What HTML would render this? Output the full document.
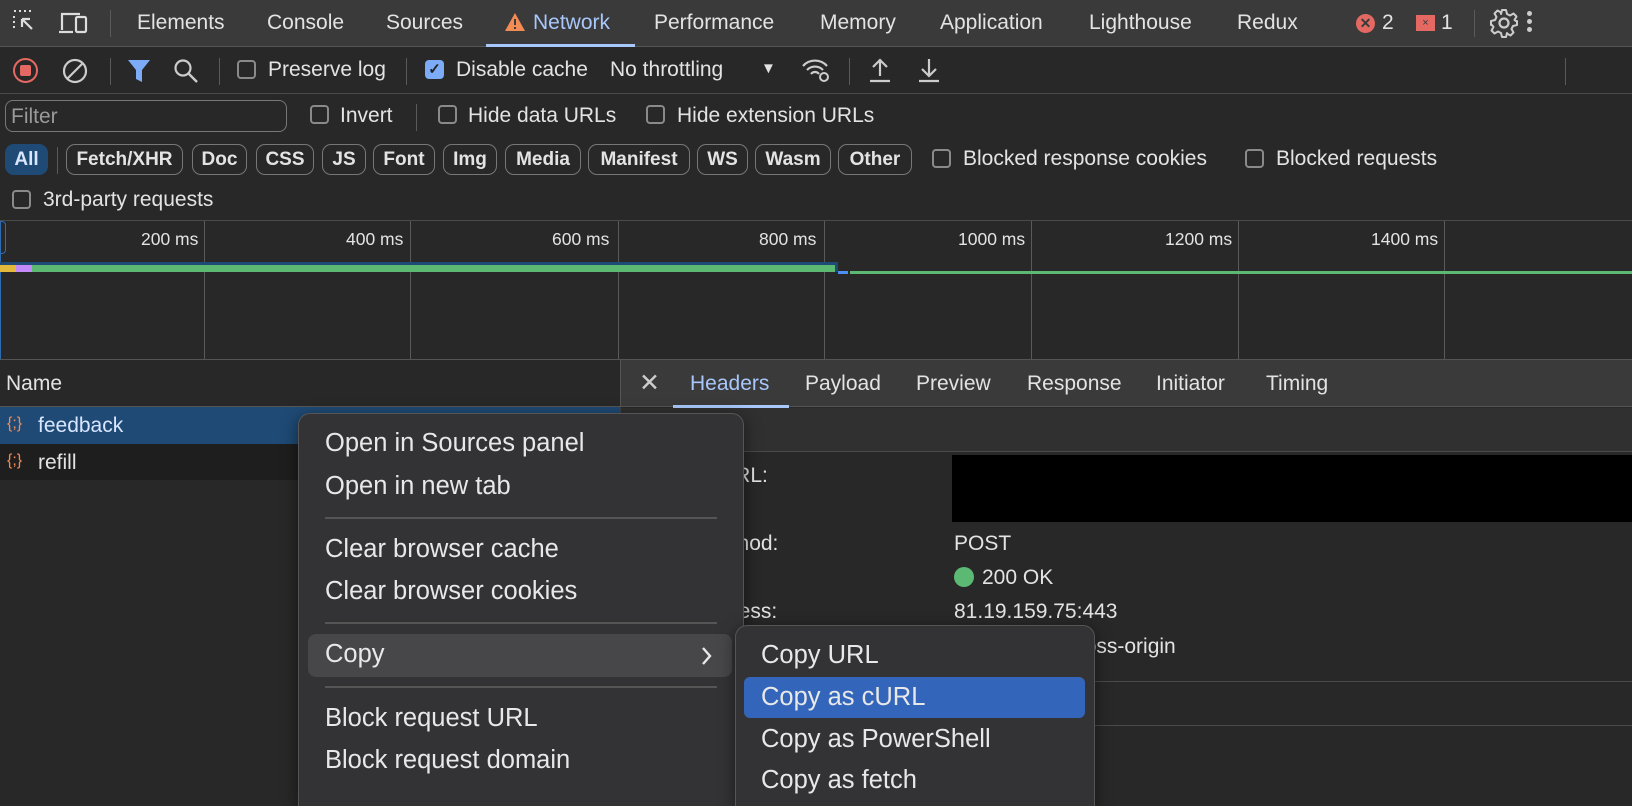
<!DOCTYPE html>
<html style="overflow:hidden;height:806px"><head><style>
*{box-sizing:border-box;margin:0;padding:0}
body{width:1632px;height:806px;overflow:hidden;background:#282828;font-family:"Liberation Sans",sans-serif;color:#e3e3e3;position:relative;font-size:21px}
.a{position:absolute;white-space:nowrap}
.cb{position:absolute;width:19px;height:19px;border:2px solid #8a8a8a;border-radius:4px}
.pill{position:absolute;top:144px;height:31px;border:1px solid #777;border-radius:9px;font-size:19px;font-weight:bold;line-height:29px;text-align:center;color:#e3e3e3}
.vl{position:absolute;width:1px;background:#5a5a5a}
.menu{position:absolute;background:#333335;border:1px solid #555;border-bottom:none;border-radius:12px 12px 0 0;box-shadow:0 4px 16px rgba(0,0,0,.5)}
.mi{position:absolute;font-size:25.5px;color:#e8e8e8}
.tl{position:absolute;top:229px;font-size:17.5px}
.dot{position:absolute;width:5px;height:5px;border-radius:50%;background:#ccc}
</style></head><body>
<div class="a" style="left:0;top:0;width:1632px;height:47px;background:#3a3a3a;border-bottom:1px solid #555"></div>
<svg class="a" style="left:12px;top:9px" width="40" height="28" viewBox="0 0 40 28"><path d="M2 2h2M7 2h2M12 2h2M17 2h2M2 7v2M2 12v2M2 17v2" stroke="#ddd" stroke-width="2"/><path d="M10 10l10 10M10 10v8M10 10h8" stroke="#ddd" stroke-width="2.2" fill="none"/></svg>
<svg class="a" style="left:58px;top:8px" width="34" height="30"><path d="M4 22V6h18" stroke="#ddd" stroke-width="2.2" fill="none"/><path d="M1 24h14" stroke="#ddd" stroke-width="2.2"/><rect x="18" y="9" width="10" height="15" rx="1.5" stroke="#ddd" stroke-width="2.2" fill="none"/></svg>
<div class="vl" style="left:110px;top:10px;height:27px"></div>
<div class="a" style="left:137px;top:11px">Elements</div>
<div class="a" style="left:267px;top:11px">Console</div>
<div class="a" style="left:386px;top:11px">Sources</div>
<svg class="a" style="left:504px;top:12px" width="22" height="20"><path d="M11 1L21 19H1Z" fill="#f28b54"/><path d="M11 7v6M11 15v2" stroke="#3a3a3a" stroke-width="2"/></svg>
<div class="a" style="left:533px;top:11px;color:#a8c7fa">Network</div>
<div class="a" style="left:486px;top:44px;width:149px;height:3px;background:#a8c7fa"></div>
<div class="a" style="left:654px;top:11px">Performance</div>
<div class="a" style="left:820px;top:11px">Memory</div>
<div class="a" style="left:940px;top:11px">Application</div>
<div class="a" style="left:1089px;top:11px">Lighthouse</div>
<div class="a" style="left:1237px;top:11px">Redux</div>
<div class="a" style="left:1356px;top:14px;width:19px;height:19px;border-radius:50%;background:#e46962;color:#3a3a3a;font-size:14px;line-height:19px;text-align:center;font-weight:bold">✕</div>
<div class="a" style="left:1382px;top:11px">2</div>
<div class="a" style="left:1416px;top:15px;width:19px;height:16px;background:#e46962;color:#3a3a3a;font-size:11px;text-align:center;line-height:16px">×</div>
<div class="a" style="left:1441px;top:11px">1</div>
<div class="vl" style="left:1474px;top:10px;height:27px"></div>
<svg class="a" style="left:1489px;top:8px" width="30" height="30" viewBox="0 0 30 30"><circle cx="15" cy="15" r="4.5" stroke="#ccc" stroke-width="2.2" fill="none"/><path d="M13 2h4l1 4 3 1.5 3.5-2 3 3-2 3.5L27 13l1 0v4l-4 1-1.5 3 2 3.5-3 3-3.5-2L18 25l-1 4h-4l-1-4-3-1.5-3.5 2-3-3 2-3.5L3 17H2v-4l4-1 1.5-3-2-3.5 3-3 3.5 2L12 6Z" stroke="#ccc" stroke-width="2" fill="none" stroke-linejoin="round"/></svg>
<div class="dot" style="left:1527px;top:11px"></div>
<div class="dot" style="left:1527px;top:19px"></div>
<div class="dot" style="left:1527px;top:27px"></div>
<div class="a" style="left:0;top:93px;width:1632px;height:1px;background:#4a4a4a"></div>
<div class="a" style="left:13px;top:58px;width:25px;height:25px;border-radius:50%;border:2.5px solid #e46962"></div>
<div class="a" style="left:20px;top:65px;width:11px;height:11px;background:#e46962;border-radius:2px"></div>
<svg class="a" style="left:61px;top:57px" width="28" height="28"><circle cx="14" cy="14" r="11" stroke="#ccc" stroke-width="2.2" fill="none"/><path d="M6 22L22 6" stroke="#ccc" stroke-width="2.2"/></svg>
<div class="vl" style="left:110px;top:58px;height:27px"></div>
<svg class="a" style="left:127px;top:58px" width="24" height="26"><path d="M1 2h22L15 12v12l-6-3V12Z" fill="#7cacf8"/></svg>
<svg class="a" style="left:172px;top:57px" width="28" height="28"><circle cx="11" cy="11" r="7.5" stroke="#ccc" stroke-width="2.2" fill="none"/><path d="M16.5 16.5L25 25" stroke="#ccc" stroke-width="2.4"/></svg>
<div class="vl" style="left:219px;top:58px;height:27px"></div>
<div class="cb" style="left:237px;top:60px"></div>
<div class="a" style="left:268px;top:58px">Preserve log</div>
<div class="vl" style="left:406px;top:58px;height:27px"></div>
<div class="a" style="left:425px;top:60px;width:19px;height:19px;border-radius:4px;background:#7cacf8;color:#222;font-size:15px;text-align:center;line-height:19px;font-weight:bold">✓</div>
<div class="a" style="left:456px;top:58px">Disable cache</div>
<div class="a" style="left:610px;top:58px">No throttling</div>
<div class="a" style="left:761px;top:60px;font-size:15px">▼</div>
<svg class="a" style="left:800px;top:56px" width="34" height="28"><path d="M3 10a16 16 0 0 1 24 0M7 14a11 11 0 0 1 16 0M11 18a5 5 0 0 1 8 0" stroke="#ccc" stroke-width="2.2" fill="none"/><circle cx="24" cy="21" r="4" stroke="#ccc" stroke-width="2" fill="none"/></svg>
<div class="vl" style="left:849px;top:58px;height:27px"></div>
<svg class="a" style="left:868px;top:56px" width="24" height="28"><path d="M12 20V4M5 11l7-7 7 7M2 25h20" stroke="#ccc" stroke-width="2.2" fill="none"/></svg>
<svg class="a" style="left:917px;top:56px" width="24" height="28"><path d="M12 3v17M5 13l7 7 7-7M2 25h20" stroke="#ccc" stroke-width="2.2" fill="none"/></svg>
<div class="vl" style="left:1565px;top:58px;height:27px"></div>
<div class="a" style="left:5px;top:100px;width:282px;height:32px;border:1px solid #777;border-radius:8px;background:#282828"></div>
<div class="a" style="left:11px;top:105px;color:#9a9a9a">Filter</div>
<div class="cb" style="left:310px;top:105px"></div>
<div class="a" style="left:340px;top:104px">Invert</div>
<div class="vl" style="left:416px;top:104px;height:27px"></div>
<div class="cb" style="left:438px;top:105px"></div>
<div class="a" style="left:468px;top:104px">Hide data URLs</div>
<div class="cb" style="left:646px;top:105px"></div>
<div class="a" style="left:677px;top:104px">Hide extension URLs</div>
<div class="pill" style="left:5px;width:43px;border-color:#1f4a75;background:#1f4a75;color:#d8e6ff">All</div>
<div class="vl" style="left:57px;top:147px;height:27px"></div>
<div class="pill" style="left:66px;width:117px">Fetch/XHR</div>
<div class="pill" style="left:192px;width:55px">Doc</div>
<div class="pill" style="left:256px;width:58px">CSS</div>
<div class="pill" style="left:322px;width:44px">JS</div>
<div class="pill" style="left:373px;width:62px">Font</div>
<div class="pill" style="left:443px;width:54px">Img</div>
<div class="pill" style="left:505px;width:76px">Media</div>
<div class="pill" style="left:588px;width:102px">Manifest</div>
<div class="pill" style="left:697px;width:51px">WS</div>
<div class="pill" style="left:755px;width:76px">Wasm</div>
<div class="pill" style="left:838px;width:74px">Other</div>
<div class="cb" style="left:932px;top:149px"></div>
<div class="a" style="left:963px;top:147px">Blocked response cookies</div>
<div class="cb" style="left:1245px;top:149px"></div>
<div class="a" style="left:1276px;top:147px">Blocked requests</div>
<div class="cb" style="left:12px;top:190px"></div>
<div class="a" style="left:43px;top:188px">3rd-party requests</div>
<div class="a" style="left:0;top:220px;width:1632px;height:1px;background:#4a4a4a"></div>
<div class="a" style="left:0;top:359px;width:1632px;height:1px;background:#555"></div>
<div class="a" style="left:0;top:221px;width:6px;height:33px;border:1px solid #2f6bb0;border-left:none;border-radius:0 4px 4px 0"></div>
<div class="vl" style="left:0;top:221px;height:138px;background:#2f6bb0"></div>
<div class="vl" style="left:204px;top:221px;height:138px"></div>
<div class="vl" style="left:410px;top:221px;height:138px"></div>
<div class="vl" style="left:618px;top:221px;height:138px"></div>
<div class="vl" style="left:824px;top:221px;height:138px"></div>
<div class="vl" style="left:1031px;top:221px;height:138px"></div>
<div class="vl" style="left:1238px;top:221px;height:138px"></div>
<div class="vl" style="left:1444px;top:221px;height:138px"></div>
<div class="tl" style="left:141px">200 ms</div>
<div class="tl" style="left:346px">400 ms</div>
<div class="tl" style="left:552px">600 ms</div>
<div class="tl" style="left:759px">800 ms</div>
<div class="tl" style="left:958px">1000 ms</div>
<div class="tl" style="left:1165px">1200 ms</div>
<div class="tl" style="left:1371px">1400 ms</div>
<div class="a" style="left:0;top:262px;width:838px;height:10px;background:#1f4a75"></div>
<div class="a" style="left:0;top:265px;width:16px;height:7px;background:#e2b93b"></div>
<div class="a" style="left:16px;top:265px;width:16px;height:7px;background:#c58af9"></div>
<div class="a" style="left:32px;top:265px;width:803px;height:7px;background:#5bb974"></div>
<div class="a" style="left:838px;top:271px;width:10px;height:3px;background:#4c8df6"></div>
<div class="a" style="left:850px;top:271px;width:782px;height:3px;background:#5bb974"></div>
<div class="a" style="left:6px;top:372px">Name</div>
<div class="a" style="left:0;top:406px;width:620px;height:1px;background:#555"></div>
<div class="a" style="left:0;top:407px;width:620px;height:37px;background:#1f4a75"></div>
<div class="a" style="left:7px;top:415px;color:#f28b54;font-size:16px">{;}</div>
<div class="a" style="left:38px;top:414px;color:#d8e6ff">feedback</div>
<div class="a" style="left:0;top:444px;width:620px;height:36px;background:#1e1e1e"></div>
<div class="a" style="left:7px;top:452px;color:#f28b54;font-size:16px">{;}</div>
<div class="a" style="left:38px;top:451px">refill</div>
<div class="a" style="left:620px;top:360px;width:1012px;height:47px;background:#3a3a3a;border-bottom:1px solid #555;border-left:1px solid #555"></div>
<div class="vl" style="left:620px;top:407px;height:399px;background:#444"></div>
<div class="a" style="left:639px;top:368px;font-size:25px;color:#ccc">✕</div>
<div class="a" style="left:690px;top:372px;color:#a8c7fa">Headers</div>
<div class="a" style="left:673px;top:405px;width:116px;height:3px;background:#a8c7fa"></div>
<div class="a" style="left:805px;top:372px">Payload</div>
<div class="a" style="left:916px;top:372px">Preview</div>
<div class="a" style="left:1027px;top:372px">Response</div>
<div class="a" style="left:1156px;top:372px">Initiator</div>
<div class="a" style="left:1266px;top:372px">Timing</div>
<div class="a" style="left:621px;top:408px;width:1011px;height:44px;background:#303030;border-bottom:1px solid #4a4a4a"></div>
<div class="a" style="left:720px;top:464px">URL:</div>
<div class="a" style="left:952px;top:455px;width:680px;height:67px;background:#000"></div>
<div class="a" style="left:720px;top:532px">ethod:</div>
<div class="a" style="left:954px;top:532px">POST</div>
<div class="a" style="left:720px;top:566px">e:</div>
<div class="a" style="left:954px;top:567px;width:20px;height:20px;border-radius:50%;background:#5bb974"></div>
<div class="a" style="left:982px;top:566px">200 OK</div>
<div class="a" style="left:720px;top:600px">dress:</div>
<div class="a" style="left:954px;top:600px">81.19.159.75:443</div>
<div class="a" style="left:1010px;top:635px">when-cross-origin</div>
<div class="a" style="left:621px;top:681px;width:1011px;height:1px;background:#4a4a4a"></div>
<div class="a" style="left:621px;top:725px;width:1011px;height:1px;background:#4a4a4a"></div>
<div class="menu" style="left:298px;top:413px;width:446px;height:393px"></div>
<div class="mi" style="left:325px;top:429px">Open in Sources panel</div>
<div class="mi" style="left:325px;top:472px">Open in new tab</div>
<div class="a" style="left:325px;top:517px;width:392px;height:2px;background:#555"></div>
<div class="mi" style="left:325px;top:535px">Clear browser cache</div>
<div class="mi" style="left:325px;top:577px">Clear browser cookies</div>
<div class="a" style="left:325px;top:622px;width:392px;height:2px;background:#555"></div>
<div class="a" style="left:308px;top:634px;width:424px;height:43px;background:#47474a;border-radius:8px"></div>
<div class="mi" style="left:325px;top:640px">Copy</div>
<svg class="a" style="left:700px;top:645px" width="14" height="22"><path d="M3 3l7 8-7 8" stroke="#e8e8e8" stroke-width="2.4" fill="none"/></svg>
<div class="a" style="left:325px;top:686px;width:392px;height:2px;background:#555"></div>
<div class="mi" style="left:325px;top:704px">Block request URL</div>
<div class="mi" style="left:325px;top:746px">Block request domain</div>
<div class="menu" style="left:735px;top:625px;width:360px;height:181px"></div>
<div class="mi" style="left:761px;top:641px">Copy URL</div>
<div class="a" style="left:744px;top:677px;width:341px;height:41px;background:#3366bb;border-radius:6px"></div>
<div class="mi" style="left:761px;top:683px">Copy as cURL</div>
<div class="mi" style="left:761px;top:725px">Copy as PowerShell</div>
<div class="mi" style="left:761px;top:766px">Copy as fetch</div>
</body></html>
